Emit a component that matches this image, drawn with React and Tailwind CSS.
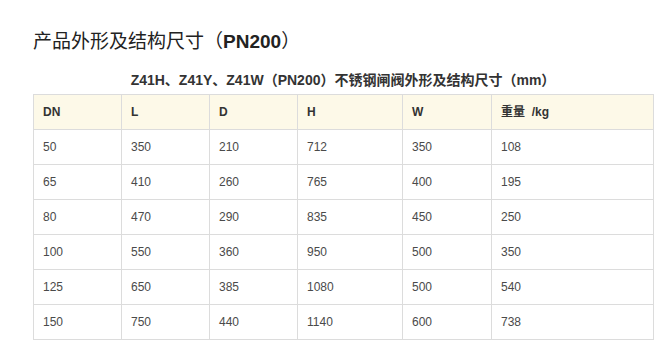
import React from "react";

const rows = [
  ["50", "350", "210", "712", "350", "108"],
  ["65", "410", "260", "765", "400", "195"],
  ["80", "470", "290", "835", "450", "250"],
  ["100", "550", "360", "950", "500", "350"],
  ["125", "650", "385", "1080", "500", "540"],
  ["150", "750", "440", "1140", "600", "738"],
];

const widths = ["w-[88px]", "w-[88px]", "w-[88px]", "w-[105px]", "w-[89px]", "w-[162px]"];

function App() {
  return (
    <div className="w-[671px] h-[349px] bg-white overflow-hidden font-['Liberation_Sans','Noto_Sans_CJK_SC',sans-serif]">
      <div className="pl-[33px] pt-[30px]">
        <h1 className="text-[19px] leading-[24px] text-[#222] font-normal">
          产品外形及结构尺寸（<span className="font-bold">PN200</span>）
        </h1>

        <p className="w-[620px] mt-[17px] text-center text-[14px] leading-[18px] font-bold text-[#333]">
          Z41H、Z41Y、Z41W（PN200）不锈钢闸阀外形及结构尺寸（mm）
        </p>

        <table className="mt-[5px] w-[620px] border-collapse table-fixed text-[12px] text-[#4a4a4a]">
          <thead>
            <tr className="h-[35px] bg-[#fdf9e8]">
              {["DN", "L", "D", "H", "W", "重量\u00a0 /kg"].map((h, i) => (
                <th
                  key={h}
                  className={`${widths[i]} border border-[#dcdcdc] pl-[9px] text-left font-bold text-[#333]`}
                >
                  {h}
                </th>
              ))}
            </tr>
          </thead>
          <tbody>
            {rows.map((r) => (
              <tr key={r[0]} className="h-[35px]">
                {r.map((c, i) => (
                  <td key={i} className="border border-[#dcdcdc] pl-[9px] text-left">
                    {c}
                  </td>
                ))}
              </tr>
            ))}
          </tbody>
        </table>
      </div>
    </div>
  );
}

export default App;
